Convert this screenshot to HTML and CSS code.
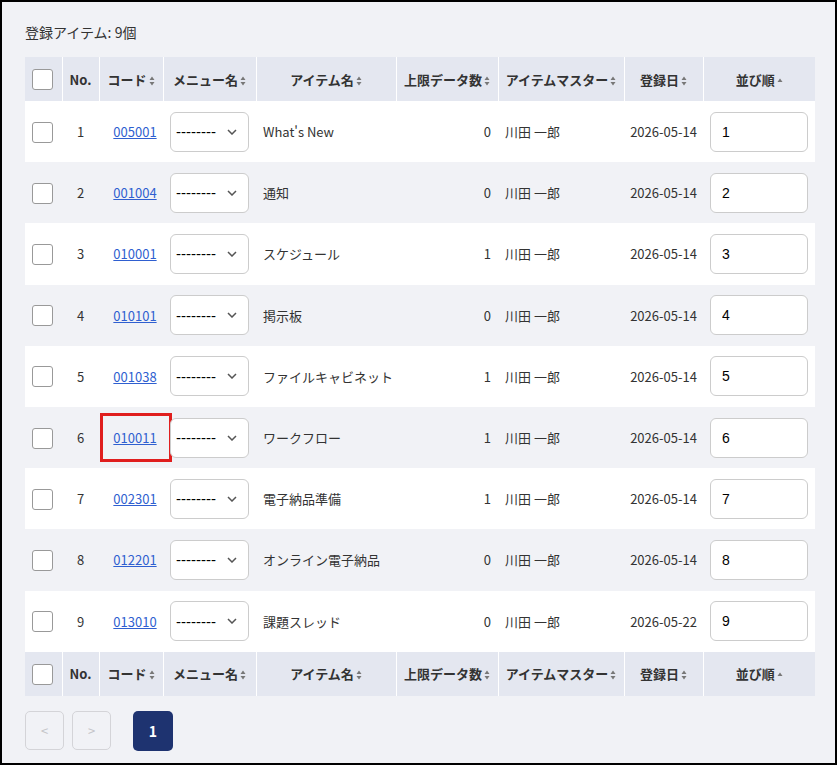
FILE: index.html
```html
<!DOCTYPE html>
<html lang="ja">
  <head>
    <meta charset="UTF-8" />
    <title>登録アイテム</title>
    <link rel="stylesheet" href="styles.css">
  </head>
  <body>
    <div class="page">
      <p class="count">登録アイテム: 9個</p>
      <table class="items">
        <colgroup>
          <col style="width:37px"><col style="width:37px"><col style="width:64px">
          <col style="width:93px"><col style="width:140px"><col style="width:102px">
          <col style="width:126px"><col style="width:79px"><col style="width:112px">
        </colgroup>
        <thead>
          <tr>
            <th><input type="checkbox" class="check"></th>
            <th>No.</th>
            <th>コード<svg class="sort" viewBox="0 0 6 10"><path d="M3 0.5 L5.5 4 H0.5 Z M3 9.5 L5.5 6 H0.5 Z"/></svg></th>
            <th>メニュー名<svg class="sort" viewBox="0 0 6 10"><path d="M3 0.5 L5.5 4 H0.5 Z M3 9.5 L5.5 6 H0.5 Z"/></svg></th>
            <th>アイテム名<svg class="sort" viewBox="0 0 6 10"><path d="M3 0.5 L5.5 4 H0.5 Z M3 9.5 L5.5 6 H0.5 Z"/></svg></th>
            <th>上限データ数<svg class="sort" viewBox="0 0 6 10"><path d="M3 0.5 L5.5 4 H0.5 Z M3 9.5 L5.5 6 H0.5 Z"/></svg></th>
            <th>アイテムマスター<svg class="sort" viewBox="0 0 6 10"><path d="M3 0.5 L5.5 4 H0.5 Z M3 9.5 L5.5 6 H0.5 Z"/></svg></th>
            <th>登録日<svg class="sort" viewBox="0 0 6 10"><path d="M3 0.5 L5.5 4 H0.5 Z M3 9.5 L5.5 6 H0.5 Z"/></svg></th>
            <th>並び順<svg class="sort" viewBox="0 0 6 10"><path d="M3 2.5 L5.5 6 H0.5 Z"/></svg></th>
          </tr>
        </thead>
        <tbody>
          <tr>
            <td><input type="checkbox" class="check"></td>
            <td class="num">1</td>
            <td class="code"><a href="#">005001</a></td>
            <td><div class="menu"><select><option>--------</option></select><svg viewBox="0 0 10 6"><path d="M1 1 L5 5 L9 1"/></svg></div></td>
            <td class="name">What's New</td>
            <td class="limit">0</td>
            <td class="master">川田 一郎</td>
            <td class="date">2026-05-14</td>
            <td><input type="text" class="order" value="1"></td>
          </tr>
          <tr>
            <td><input type="checkbox" class="check"></td>
            <td class="num">2</td>
            <td class="code"><a href="#">001004</a></td>
            <td><div class="menu"><select><option>--------</option></select><svg viewBox="0 0 10 6"><path d="M1 1 L5 5 L9 1"/></svg></div></td>
            <td class="name">通知</td>
            <td class="limit">0</td>
            <td class="master">川田 一郎</td>
            <td class="date">2026-05-14</td>
            <td><input type="text" class="order" value="2"></td>
          </tr>
          <tr>
            <td><input type="checkbox" class="check"></td>
            <td class="num">3</td>
            <td class="code"><a href="#">010001</a></td>
            <td><div class="menu"><select><option>--------</option></select><svg viewBox="0 0 10 6"><path d="M1 1 L5 5 L9 1"/></svg></div></td>
            <td class="name">スケジュール</td>
            <td class="limit">1</td>
            <td class="master">川田 一郎</td>
            <td class="date">2026-05-14</td>
            <td><input type="text" class="order" value="3"></td>
          </tr>
          <tr>
            <td><input type="checkbox" class="check"></td>
            <td class="num">4</td>
            <td class="code"><a href="#">010101</a></td>
            <td><div class="menu"><select><option>--------</option></select><svg viewBox="0 0 10 6"><path d="M1 1 L5 5 L9 1"/></svg></div></td>
            <td class="name">掲示板</td>
            <td class="limit">0</td>
            <td class="master">川田 一郎</td>
            <td class="date">2026-05-14</td>
            <td><input type="text" class="order" value="4"></td>
          </tr>
          <tr>
            <td><input type="checkbox" class="check"></td>
            <td class="num">5</td>
            <td class="code"><a href="#">001038</a></td>
            <td><div class="menu"><select><option>--------</option></select><svg viewBox="0 0 10 6"><path d="M1 1 L5 5 L9 1"/></svg></div></td>
            <td class="name">ファイルキャビネット</td>
            <td class="limit">1</td>
            <td class="master">川田 一郎</td>
            <td class="date">2026-05-14</td>
            <td><input type="text" class="order" value="5"></td>
          </tr>
          <tr>
            <td><input type="checkbox" class="check"></td>
            <td class="num">6</td>
            <td class="code"><a href="#">010011</a><span class="mark"></span></td>
            <td><div class="menu"><select><option>--------</option></select><svg viewBox="0 0 10 6"><path d="M1 1 L5 5 L9 1"/></svg></div></td>
            <td class="name">ワークフロー</td>
            <td class="limit">1</td>
            <td class="master">川田 一郎</td>
            <td class="date">2026-05-14</td>
            <td><input type="text" class="order" value="6"></td>
          </tr>
          <tr>
            <td><input type="checkbox" class="check"></td>
            <td class="num">7</td>
            <td class="code"><a href="#">002301</a></td>
            <td><div class="menu"><select><option>--------</option></select><svg viewBox="0 0 10 6"><path d="M1 1 L5 5 L9 1"/></svg></div></td>
            <td class="name">電子納品準備</td>
            <td class="limit">1</td>
            <td class="master">川田 一郎</td>
            <td class="date">2026-05-14</td>
            <td><input type="text" class="order" value="7"></td>
          </tr>
          <tr>
            <td><input type="checkbox" class="check"></td>
            <td class="num">8</td>
            <td class="code"><a href="#">012201</a></td>
            <td><div class="menu"><select><option>--------</option></select><svg viewBox="0 0 10 6"><path d="M1 1 L5 5 L9 1"/></svg></div></td>
            <td class="name">オンライン電子納品</td>
            <td class="limit">0</td>
            <td class="master">川田 一郎</td>
            <td class="date">2026-05-14</td>
            <td><input type="text" class="order" value="8"></td>
          </tr>
          <tr>
            <td><input type="checkbox" class="check"></td>
            <td class="num">9</td>
            <td class="code"><a href="#">013010</a></td>
            <td><div class="menu"><select><option>--------</option></select><svg viewBox="0 0 10 6"><path d="M1 1 L5 5 L9 1"/></svg></div></td>
            <td class="name">課題スレッド</td>
            <td class="limit">0</td>
            <td class="master">川田 一郎</td>
            <td class="date">2026-05-22</td>
            <td><input type="text" class="order" value="9"></td>
          </tr>
        </tbody>
        <tfoot>
          <tr>
            <th><input type="checkbox" class="check"></th>
            <th>No.</th>
            <th>コード<svg class="sort" viewBox="0 0 6 10"><path d="M3 0.5 L5.5 4 H0.5 Z M3 9.5 L5.5 6 H0.5 Z"/></svg></th>
            <th>メニュー名<svg class="sort" viewBox="0 0 6 10"><path d="M3 0.5 L5.5 4 H0.5 Z M3 9.5 L5.5 6 H0.5 Z"/></svg></th>
            <th>アイテム名<svg class="sort" viewBox="0 0 6 10"><path d="M3 0.5 L5.5 4 H0.5 Z M3 9.5 L5.5 6 H0.5 Z"/></svg></th>
            <th>上限データ数<svg class="sort" viewBox="0 0 6 10"><path d="M3 0.5 L5.5 4 H0.5 Z M3 9.5 L5.5 6 H0.5 Z"/></svg></th>
            <th>アイテムマスター<svg class="sort" viewBox="0 0 6 10"><path d="M3 0.5 L5.5 4 H0.5 Z M3 9.5 L5.5 6 H0.5 Z"/></svg></th>
            <th>登録日<svg class="sort" viewBox="0 0 6 10"><path d="M3 0.5 L5.5 4 H0.5 Z M3 9.5 L5.5 6 H0.5 Z"/></svg></th>
            <th>並び順<svg class="sort" viewBox="0 0 6 10"><path d="M3 2.5 L5.5 6 H0.5 Z"/></svg></th>
          </tr>
        </tfoot>
      </table>
      <nav class="pager">
        <button class="page-btn" disabled>&lt;</button>
        <button class="page-btn" disabled>&gt;</button>
        <button class="page-btn current">1</button>
      </nav>
    </div>
  </body>
</html>
```

FILE: styles.css
```css
html {
  font-size: 13px;
  font-family: "Noto Sans CJK JP", "Noto Sans", sans-serif;
  color: #333;
}
body {
  margin: 0;
  height: 765px;
  box-sizing: border-box;
  border: 2px solid #000;
  background-color: #f1f2f6;
}
.page {
  padding: 20px 0 0 23px;
  width: 790px;
}
.count {
  margin: 0 0 15px;
  font-size: 14px;
  line-height: 20px;
}

/************************
  TABLE
************************/
.items {
  width: 790px;
  table-layout: fixed;
  border-collapse: collapse;
}
.items th {
  height: 44px;
  padding: 0;
  background-color: #e4e7f0;
  border-left: 1px solid #fff;
  border-right: 1px solid #fff;
  font-weight: bold;
  text-align: center;
  white-space: nowrap;
}
.items th:first-child {
  border-left: 0;
}
.items th:last-child {
  border-right: 0;
}
.sort {
  width: 6px;
  height: 10px;
  margin-left: 2px;
  vertical-align: -1px;
  fill: #777;
}
.items td {
  height: 61.2px;
  padding: 0 7px;
  white-space: nowrap;
}
.items tbody tr:nth-child(odd) {
  background-color: #fff;
}
.items tbody tr:nth-child(even) {
  background-color: #f1f2f6;
}
.items td:first-child {
  padding: 0;
  text-align: center;
}
.check {
  appearance: none;
  width: 21px;
  height: 21px;
  margin: 0 0 0 -2px;
  vertical-align: middle;
  background: #fff;
  border: 1px solid #999;
  border-radius: 3px;
}
.num,
.date {
  text-align: center;
}
.items td.num,
.items td.date {
  padding: 0;
}
.code {
  position: relative;
  text-align: center;
}
.items td.code {
  padding: 0 3px 0 11px;
}
.code a {
  color: #2f5fd0;
}
.mark {
  position: absolute;
  left: 1px;
  top: 6px;
  width: 66px;
  height: 43px;
  border: 3px solid #e01e1e;
}
.limit {
  text-align: right;
}
.menu {
  position: relative;
  width: 79px;
}
.menu select {
  appearance: none;
  width: 79px;
  height: 40px;
  padding: 0 0 0 5px;
  border: 1px solid #ccc;
  border-radius: 6px;
  background: #fff;
  font-family: "Liberation Sans", sans-serif;
  font-size: 15px;
  color: #000;
}
.menu svg {
  position: absolute;
  left: 57px;
  top: 17px;
  width: 10px;
  height: 6px;
  fill: none;
  stroke: #555;
  stroke-width: 1.5;
  pointer-events: none;
}
.order {
  box-sizing: border-box;
  width: 98px;
  height: 40px;
  padding: 0 11px;
  border: 1px solid #ccc;
  border-radius: 6px;
  font-family: "Liberation Sans", sans-serif;
  font-size: 14px;
  color: #000;
}

/************************
  PAGER
************************/
.pager {
  display: flex;
  gap: 8px;
  margin-top: 15px;
}
.page-btn {
  width: 39px;
  height: 39px;
  padding: 0;
  border: 1px solid #d4d4d8;
  border-radius: 5px;
  background: transparent;
  color: #c4c4c8;
  font-family: "Noto Sans CJK JP", sans-serif;
  font-size: 13px;
}
.page-btn.current {
  width: 40px;
  height: 40px;
  margin-left: 14px;
  border: 0;
  background-color: #1e3370;
  color: #fff;
  font-weight: bold;
  font-size: 14px;
}
```
